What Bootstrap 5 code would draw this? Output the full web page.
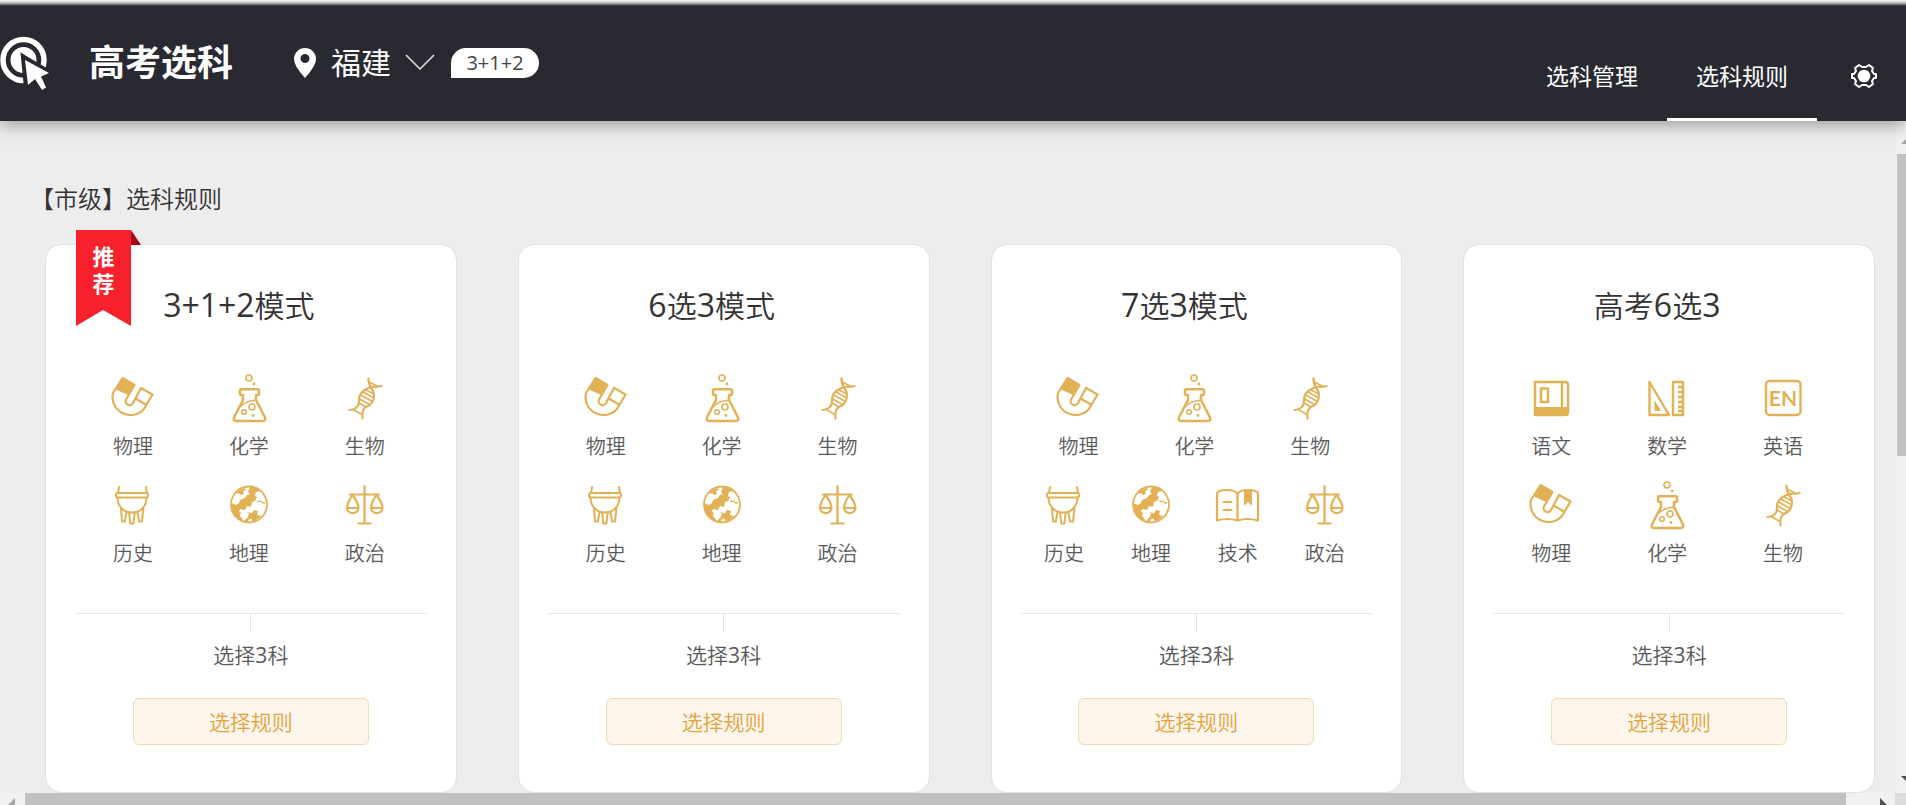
<!DOCTYPE html>
<html lang="zh-CN">
<head>
<meta charset="utf-8">
<meta name="viewport" content="width=device-width, initial-scale=1">
<title>高考选科</title>
<link href="https://cdn.jsdelivr.net/npm/bootstrap@5.3.0/dist/css/bootstrap.min.css" rel="stylesheet">
<style>
  body { font-family: "Open Sans", "Noto Sans CJK SC", sans-serif; font-weight: 350; background: #ededed; color: #333; }
  .site-head { height: 121px; background: #292931; color: #fff; box-shadow: 0 4px 16px rgba(70, 80, 75, .5); z-index: 2; }
  .site-head::before { content: ""; position: absolute; inset: 0 0 auto 0; height: 6px; background: linear-gradient(#fff, #b5b9b8 50%, #292931); }
  .brand-group { padding-bottom: 17px; padding-top: 22px; }
  .brand-name { font-size: 36px; line-height: 44px; font-weight: 700; margin: 0 0 0 39px; }
  .city-btn { font-size: 30px; line-height: 44px; font-weight: 400; margin-left: 60px; gap: 14px; color: #fff; }
  .mode-tag { width: 88px; height: 30px; margin-left: 16px; border-radius: 15px 15px 15px 0; background: #fff; color: #444; font-size: 20px; line-height: 30px; }
  .tab-link { width: 150px; height: 121px; padding-top: 35px; font-size: 23px; font-weight: 400; color: #fff; text-decoration: none; border-bottom: 3px solid transparent; }
  .tab-link.active { border-color: #fff; }
  .gear-btn { width: 89px; padding: 31px 0 0 5px; color: #fff; }
  .content { overflow: hidden; min-height: 0; }
  .rules-title { font-size: 24px; line-height: 36px; font-weight: 350; margin: 60px 0 27px 30px; }
  .rules { display: grid; grid-template-columns: repeat(4, 1fr); gap: 61px; padding: 0 21px 1px 45px; }
  .rule-card { border: 1px solid #e1e1e1; border-radius: 16px; padding: 41px 29px 47px; background: #fff; }
  .rule-name { font-size: 30px; line-height: 40px; font-weight: 350; margin: 0 0 47px; padding-right: 24px; text-align: center; }
  .digits { font-weight: 400; }
  .rule-name .digits { font-size: 32px; line-height: 1; }
  .subjects { padding-right: 4px; row-gap: 18px; }
  .subject { flex: 1 1 0; font-size: 20px; line-height: 30px; color: #5a5a5a; }
  .subject svg { width: 50px; height: 50px; margin-bottom: 9px; color: #e2b155; }
  .divide { border-top: 1px solid #e6e6e6; margin-top: 44px; }
  .divide::after { content: ""; display: block; width: 1px; height: 18px; margin: 0 auto; background: #e6e6e6; }
  .pick-note { font-size: 21px; line-height: 30px; color: #5a5a5a; margin: 8px 0 28px; }
  .pick-btn { width: 236px; height: 47px; border: 1px solid #efd9b0; border-radius: 6px; background: #fef6ec; color: #e2a33c; font-size: 21px; font-weight: 350; line-height: 30px; padding: 0; }
  .ribbon { position: absolute; left: 30px; top: -15px; width: 66px; height: 98px; }
  .ribbon svg { position: absolute; inset: 0; }
  .ribbon span { position: relative; display: block; width: 55px; padding-top: 13px; font-size: 22px; line-height: 27px; font-weight: 700; color: #fff; text-align: center; }
  .vbar { width: 10px; background: #f1f1f1; padding: 18px 0 12px; overflow: hidden; }
  .vbar i { display: block; height: 302px; margin: 10px 0 0 1px; background: #c1c1c1; }
  .hbar { height: 12px; background: #f1f1f1; }
  .hbar i { background: #c1c1c1; }
  .hbar b { width: 11px; background: #dcdcdc; }
</style>
</head>
<body>
<svg class="d-none" xmlns="http://www.w3.org/2000/svg">
  <symbol id="wuli" viewBox="0 0 50 50"><path d="M14.500 5 26.500 12 18 26.500a3.800 3.800 0 0 0 7 3.500L33 15l11.500 6.500L36 36A18 18 0 0 1 5 20Z" fill="none" stroke="currentColor" stroke-width="2.200" stroke-linejoin="round"/><path d="M14.500 5 26.500 12 21 22.500 8 16.500Z" fill="currentColor"/><path d="m27.500 25.500 10.500 6" stroke="currentColor" stroke-width="2.200"/></symbol>
  <symbol id="huaxue" viewBox="0 0 50 50"><g fill="none" stroke="currentColor" stroke-width="2.500" stroke-linejoin="round"><path d="M19 22h-1.500Q16 22 16 20.500v-3Q16 16.200 17.500 16.200h16q1.500 0 1.500 1.300v3Q35 22 33.500 22H32v5l8.800 17q1.500 4-2 4H12.200q-3.500 0-2-4L19 27Z"/><path d="M15 35q5-7 17.500-8" stroke-width="1.500"/><circle cx="25" cy="5" r="3" stroke-width="1.600"/><circle cx="28" cy="34" r="3" stroke-width="1.600"/><circle cx="20" cy="39" r="2.300" stroke-width="1.600"/></g><g fill="currentColor"><circle cx="30" cy="11" r="1.400"/><circle cx="29" cy="42.500" r="1.400"/></g></symbol>
  <symbol id="shengwu" viewBox="0 0 50 50"><g fill="none" stroke="currentColor" stroke-width="2.200" stroke-linecap="round"><path d="M28.500 5.500C28 14 34 16 34 22c0 7-3 10-8 12-4 2-4 7-3.500 11.500M41.500 13c-5 2-7-1-13 2-7 3-10 7-9.500 13 .5 6-5 9-9.500 9"/><path stroke-width="1.600" d="m29 9 9 4.500M26 17l7 3.500M23 19l10 5.500M20.500 22l12 6.500M19.500 26l10 5.500M19 30l6 3.500M13 36.500l9 5"/></g></symbol>
  <symbol id="lishi" viewBox="0 0 50 50"><g fill="none" stroke="currentColor" stroke-width="2" stroke-linejoin="round" stroke-linecap="round"><path d="m11 7-1 6m28-6 1 6"/><rect x="8" y="13" width="32" height="4.500" rx="2"/><path d="M9.500 18C10 28 17 32.500 24 32.500S38 28 38.500 18M13 27.500l1 14h2.800L18.500 32M21 32.500l1.300 11h3l1.500-11M29.500 32l1.500 9.500h3l1.500-14"/></g></symbol>
  <symbol id="dili" viewBox="0 0 50 50"><circle cx="25" cy="24.500" r="18" fill="none" stroke="currentColor" stroke-width="1.800"/><path fill="currentColor" d="M26 7h7l3 4-4 1-1 4 2 1-2 4-3 1-1 5-4-1-2 4-5-1-1 3 4 1 5-1 5 2-1 4-4 2 1 3q-16-1-18-20l5 2 3-2 1-3 5-2 2-3 3-1-2-2ZM30 30l4 1-1 4 4 1q-4 5-9 5l-1-6ZM16 10l5-2 1 2-3 1 1 3-3 1-2-2-2 1v-2ZM33 20l3 1 2-1v1.500l-4 1ZM37 22h4v1.500h-3Z"/><path d="m17 32 4-1 4 2-1 4-4 4-4-5Z" fill="#fff"/></symbol>
  <symbol id="zhengzhi" viewBox="0 0 50 50"><g fill="none" stroke="currentColor" stroke-width="2.200" stroke-linecap="round" stroke-linejoin="round"><path d="M24.500 6v37M18.500 43.500h12M10 14.500h29"/><path d="M12.500 15Q7 23 7 28a5.800 5.800 0 0 0 11.500 0q0-5-6-13ZM7 28h11.500M36.500 15Q31 23 31 28a5.800 5.800 0 0 0 11.500 0q0-5-6-13ZM31 28h11.500"/></g></symbol>
  <symbol id="jishu" viewBox="0 0 50 50"><path d="M24.500 14Q22 10 14 10 4 10 4 14v26.500q10-3 20.500 0 10-3 20.500 0V14q0-4-10.500-4-8 0-10 4v26.500M10.500 22h8m-8 8h8" fill="none" stroke="currentColor" stroke-width="2.200" stroke-linecap="round" stroke-linejoin="round"/><path d="M31 10h8v16l-4-4-4 4Z" fill="currentColor"/></symbol>
  <symbol id="yuwen" viewBox="0 0 50 50"><path d="M9 9h30q3 0 3 3v27q0 3-3 3H9ZM36 9v26M15 15.500h7V29h-7Z" fill="none" stroke="currentColor" stroke-width="2.500" stroke-linejoin="round"/><path d="M8 34h35v5q0 4-4 4H8Z" fill="currentColor"/></symbol>
  <symbol id="shuxue" viewBox="0 0 50 50"><path d="M7.500 9v33h19.500ZM31 9h10v33H31ZM36 14h5m-5 5h5m-5 5h5m-5 5h5m-5 5h5m-5 4h5" fill="none" stroke="currentColor" stroke-width="2.400" stroke-linejoin="round"/><path d="M12.500 27v11H19Z" fill="currentColor"/></symbol>
  <symbol id="yingyu" viewBox="0 0 50 50"><rect x="8" y="8" width="34.500" height="34" rx="3.500" fill="none" stroke="currentColor" stroke-width="2.400"/><text x="25" y="32.500" text-anchor="middle" font-family="Lato, sans-serif" font-size="21" font-weight="700" fill="currentColor">EN</text></symbol>
</svg>

<div class="vh-100 d-flex flex-column overflow-hidden">
  <header class="site-head position-relative flex-shrink-0 d-flex justify-content-between">
    <div class="brand-group d-flex align-items-center">
      <svg width="50" height="60" viewBox="0 0 50 60" aria-hidden="true"><circle cx="23.500" cy="27" r="20.500" fill="none" stroke="#fff" stroke-width="5.500"/><circle cx="23.500" cy="27" r="13" fill="#fff"/><path d="m24 25 25 15-7 4 6 11-6 4-7-11-8 7Z" fill="#fff" stroke="#292931" stroke-width="6"/><path d="m25 27 24 13-8 3.500 5 11-4 2.500-7-11-7 6Z" fill="#fff"/></svg>
      <h1 class="brand-name">高考选科</h1>
      <button type="button" class="city-btn btn p-0 border-0 d-flex align-items-center">
        <svg width="24" height="30" viewBox="0 0 24 30" aria-hidden="true"><path fill="#fff" fill-rule="evenodd" d="M12 0a11 11 0 0 1 11 11q0 7-11 19Q1 18 1 11A11 11 0 0 1 12 0Zm0 6a4.500 4.500 0 1 0 0 9 4.500 4.500 0 0 0 0-9Z"/></svg>
        <span>福建</span>
        <svg width="30" height="18" viewBox="0 0 30 18" aria-hidden="true"><path d="m1 1 14 14L29 1" fill="none" stroke="#e8e8e8" stroke-width="1.500"/></svg>
      </button>
      <span class="mode-tag digits text-center">3+1+2</span>
    </div>
    <nav class="d-flex" aria-label="主导航">
      <a href="#" class="tab-link d-flex align-items-center justify-content-center">选科管理</a>
      <a href="#" class="tab-link active d-flex align-items-center justify-content-center" aria-current="page">选科规则</a>
      <button type="button" class="gear-btn btn border-0 rounded-0 d-flex align-items-center justify-content-center" aria-label="设置">
        <svg width="26" height="26" viewBox="0 0 26 26"><path d="m8 2 3 2h4l3-2 4 3-1 3 2 3h2v4h-2l-2 3 1 3-4 3-3-2h-4l-3 2-4-3 1-3-2-3H1v-4h2l2-3-1-3Z" fill="none" stroke="#fff" stroke-width="2" stroke-linejoin="round"/><circle cx="13" cy="13" r="6.300" fill="#fff"/></svg>
      </button>
    </nav>
  </header>

  <div class="d-flex flex-grow-1 overflow-hidden">
    <main class="content flex-grow-1">
      <h2 class="rules-title">【市级】选科规则</h2>
      <div class="rules">
        <section class="rule-card position-relative">
          <div class="ribbon"><svg width="66" height="98" viewBox="0 0 66 98" aria-hidden="true"><path d="M0 0h55v96L27 80 0 96Z" fill="#f9202d"/><path d="M55 0 65 15H55Z" fill="#a80519"/></svg><span>推<br>荐</span></div>
          <h3 class="rule-name"><span class="digits">3+1+2</span>模式</h3>
          <div class="subjects d-flex flex-column text-center">
            <div class="d-flex">
              <div class="subject"><svg class="d-block mx-auto"><use href="#wuli"/></svg>物理</div>
              <div class="subject"><svg class="d-block mx-auto"><use href="#huaxue"/></svg>化学</div>
              <div class="subject"><svg class="d-block mx-auto"><use href="#shengwu"/></svg>生物</div>
            </div>
            <div class="d-flex">
              <div class="subject"><svg class="d-block mx-auto"><use href="#lishi"/></svg>历史</div>
              <div class="subject"><svg class="d-block mx-auto"><use href="#dili"/></svg>地理</div>
              <div class="subject"><svg class="d-block mx-auto"><use href="#zhengzhi"/></svg>政治</div>
            </div>
          </div>
          <div class="divide"></div>
          <p class="pick-note text-center">选择<span class="digits">3</span>科</p>
          <button type="button" class="pick-btn btn d-block mx-auto">选择规则</button>
        </section>

        <section class="rule-card">
          <h3 class="rule-name"><span class="digits">6</span>选<span class="digits">3</span>模式</h3>
          <div class="subjects d-flex flex-column text-center">
            <div class="d-flex">
              <div class="subject"><svg class="d-block mx-auto"><use href="#wuli"/></svg>物理</div>
              <div class="subject"><svg class="d-block mx-auto"><use href="#huaxue"/></svg>化学</div>
              <div class="subject"><svg class="d-block mx-auto"><use href="#shengwu"/></svg>生物</div>
            </div>
            <div class="d-flex">
              <div class="subject"><svg class="d-block mx-auto"><use href="#lishi"/></svg>历史</div>
              <div class="subject"><svg class="d-block mx-auto"><use href="#dili"/></svg>地理</div>
              <div class="subject"><svg class="d-block mx-auto"><use href="#zhengzhi"/></svg>政治</div>
            </div>
          </div>
          <div class="divide"></div>
          <p class="pick-note text-center">选择<span class="digits">3</span>科</p>
          <button type="button" class="pick-btn btn d-block mx-auto">选择规则</button>
        </section>

        <section class="rule-card">
          <h3 class="rule-name"><span class="digits">7</span>选<span class="digits">3</span>模式</h3>
          <div class="subjects d-flex flex-column text-center">
            <div class="d-flex">
              <div class="subject"><svg class="d-block mx-auto"><use href="#wuli"/></svg>物理</div>
              <div class="subject"><svg class="d-block mx-auto"><use href="#huaxue"/></svg>化学</div>
              <div class="subject"><svg class="d-block mx-auto"><use href="#shengwu"/></svg>生物</div>
            </div>
            <div class="d-flex">
              <div class="subject"><svg class="d-block mx-auto"><use href="#lishi"/></svg>历史</div>
              <div class="subject"><svg class="d-block mx-auto"><use href="#dili"/></svg>地理</div>
              <div class="subject"><svg class="d-block mx-auto"><use href="#jishu"/></svg>技术</div>
              <div class="subject"><svg class="d-block mx-auto"><use href="#zhengzhi"/></svg>政治</div>
            </div>
          </div>
          <div class="divide"></div>
          <p class="pick-note text-center">选择<span class="digits">3</span>科</p>
          <button type="button" class="pick-btn btn d-block mx-auto">选择规则</button>
        </section>

        <section class="rule-card">
          <h3 class="rule-name">高考<span class="digits">6</span>选<span class="digits">3</span></h3>
          <div class="subjects d-flex flex-column text-center">
            <div class="d-flex">
              <div class="subject"><svg class="d-block mx-auto"><use href="#yuwen"/></svg>语文</div>
              <div class="subject"><svg class="d-block mx-auto"><use href="#shuxue"/></svg>数学</div>
              <div class="subject"><svg class="d-block mx-auto"><use href="#yingyu"/></svg>英语</div>
            </div>
            <div class="d-flex">
              <div class="subject"><svg class="d-block mx-auto"><use href="#wuli"/></svg>物理</div>
              <div class="subject"><svg class="d-block mx-auto"><use href="#huaxue"/></svg>化学</div>
              <div class="subject"><svg class="d-block mx-auto"><use href="#shengwu"/></svg>生物</div>
            </div>
          </div>
          <div class="divide"></div>
          <p class="pick-note text-center">选择<span class="digits">3</span>科</p>
          <button type="button" class="pick-btn btn d-block mx-auto">选择规则</button>
        </section>
      </div>
    </main>
    <div class="vbar flex-shrink-0 d-flex flex-column justify-content-between" aria-hidden="true">
      <div>
        <svg class="d-block ms-auto" width="5" height="5" viewBox="0 0 5 5"><path d="M0 5 5 0v5Z" fill="#a3a3a3"/></svg>
        <i></i>
      </div>
      <svg class="d-block ms-auto" width="5" height="5" viewBox="0 0 5 5"><path d="M0 0h5v5Z" fill="#505050"/></svg>
    </div>
  </div>
  <div class="hbar flex-shrink-0 d-flex" aria-hidden="true">
    <svg class="mx-2" width="9" height="12" viewBox="0 0 9 12"><path d="M7 5v7H0Z" fill="#a3a3a3"/></svg>
    <i class="flex-grow-1"></i>
    <svg width="49" height="12" viewBox="0 0 49 12"><path d="M34 5v7h7Z" fill="#505050"/></svg>
    <b></b>
  </div>
</div>
<script src="https://cdn.jsdelivr.net/npm/bootstrap@5.3.0/dist/js/bootstrap.bundle.min.js"></script>
</body>
</html>
